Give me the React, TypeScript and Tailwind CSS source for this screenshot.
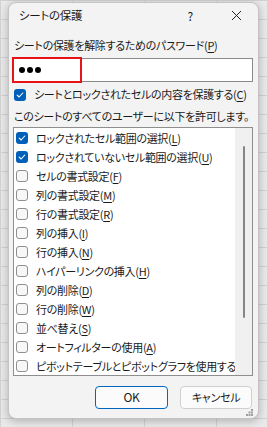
import React from 'react'

const FONT = "font-['Noto_Sans_CJK_JP','Noto_Sans',sans-serif] [font-feature-settings:'palt']"

const ITEMS: { label: string; key?: string; checked?: boolean }[] = [
  { label: 'ロックされたセル範囲の選択', key: 'L', checked: true },
  { label: 'ロックされていないセル範囲の選択', key: 'U', checked: true },
  { label: 'セルの書式設定', key: 'F' },
  { label: '列の書式設定', key: 'M' },
  { label: '行の書式設定', key: 'R' },
  { label: '列の挿入', key: 'I' },
  { label: '行の挿入', key: 'N' },
  { label: 'ハイパーリンクの挿入', key: 'H' },
  { label: '列の削除', key: 'D' },
  { label: '行の削除', key: 'W' },
  { label: '並べ替え', key: 'S' },
  { label: 'オートフィルターの使用', key: 'A' },
  { label: 'ピボットテーブルとピボットグラフを使用する' },
]

function Check({ checked }: { checked?: boolean }) {
  if (checked) {
    return (
      <span className="flex h-[12px] w-[12px] shrink-0 items-center justify-center rounded-[3px] bg-[#005fb8]">
        <svg width="8" height="8" viewBox="0 0 8 8" fill="none">
          <path d="M1.2 4.2 L3.1 6 L6.8 2" stroke="white" strokeWidth="1.1" strokeLinecap="round" strokeLinejoin="round" />
        </svg>
      </span>
    )
  }
  return <span className="h-[12px] w-[12px] shrink-0 rounded-[3px] border border-[#8f8f8f] bg-[#f7f7f7]" />
}

function Key({ k }: { k: string }) {
  return (
    <>
      (<span className="underline underline-offset-[2px]">{k}</span>)
    </>
  )
}

export default function App() {
  return (
    <div className="h-[427px] w-[267px] overflow-hidden bg-[#e9e9e9] bg-[linear-gradient(#d2d2d2_1px,transparent_1px),linear-gradient(90deg,#d2d2d2_1px,transparent_1px)] bg-[size:72px_19px] pt-[2px] pl-[8px]">
      <div className={`flex h-[417px] w-[251px] flex-col rounded-[8px] border border-[#c4c4c4] bg-[#f3f3f3] px-[4px] text-[11px] tracking-[-0.3px] whitespace-nowrap text-[#1a1a1a] shadow-[0_2px_8px_rgba(0,0,0,0.25)] ${FONT}`}>
        {/* title bar */}
        <div className="flex h-[26px] items-center">
          <span className="pl-[6px] text-[11.5px] leading-none">シートの保護</span>
          <span className="ml-auto mr-[38px] text-[12px] leading-none">?</span>
          <svg width="11" height="11" viewBox="0 0 11 11" className="mr-[12px]">
            <path d="M1 1 L10 10 M10 1 L1 10" stroke="#222" strokeWidth="1" />
          </svg>
        </div>

        <div className="mt-[7px] flex h-[18px] items-center pl-[1px]">
          シートの保護を解除するためのパスワード<Key k="P" />
        </div>

        <div className="relative mt-[4px] flex h-[24px] w-[240px] items-center border border-[#8a8a8a] bg-white pl-[5px]">
          <span className="flex gap-[2px]">
            <span className="h-[6px] w-[6px] rounded-full bg-black" />
            <span className="h-[6px] w-[6px] rounded-full bg-black" />
            <span className="h-[6px] w-[6px] rounded-full bg-black" />
          </span>
          <span className="absolute left-[-2px] top-[-2px] h-[26px] w-[70px] border-2 border-[#e5131a]" />
        </div>

        <div className="mt-[4px] flex h-[18px] items-center gap-[8px] pl-[1px]">
          <Check checked />
          <span>
            シートとロックされたセルの内容を保護する<Key k="C" />
          </span>
        </div>

        <div className="mt-[4px] flex h-[18px] items-center pl-[1px]">
          このシートのすべてのユーザーに以下を許可します。
        </div>

        <div className="mt-[2px] flex h-[250px] w-[240px] overflow-hidden border border-[#8e8e8e] bg-white">
          <div className="min-w-0 flex-1">
            {ITEMS.map((it) => (
              <div key={it.label} className="flex h-[19px] items-center gap-[8px] pl-[2px]">
                <Check checked={it.checked} />
                <span>
                  {it.label}
                  {it.key && <Key k={it.key} />}
                </span>
              </div>
            ))}
          </div>
          <div className="flex w-[17px] shrink-0 justify-center bg-[#f0f0f0] pt-[18px]">
            <div className="h-[172px] w-[2px] rounded-full bg-[#868686]" />
          </div>
        </div>

        <div className="mt-[10px] flex gap-[12px] pl-[82px]">
          <button className="h-[23px] w-[73px] rounded-[4px] border border-[#0067c0] bg-[#fbfbfb] text-[12px]">
            OK
          </button>
          <button className="h-[23px] w-[72px] rounded-[4px] border border-[#d0d0d0] bg-[#fbfbfb] text-[11px]">
            キャンセル
          </button>
        </div>

        <div className="mt-auto mb-[2px] flex justify-end pr-[1px]">
          <svg width="7" height="7" viewBox="0 0 7 7">
            <rect x="5" y="0" width="2" height="2" fill="#a0a0a0" />
            <rect x="2.5" y="2.5" width="2" height="2" fill="#a0a0a0" />
            <rect x="5" y="2.5" width="2" height="2" fill="#a0a0a0" />
            <rect x="0" y="5" width="2" height="2" fill="#a0a0a0" />
            <rect x="2.5" y="5" width="2" height="2" fill="#a0a0a0" />
            <rect x="5" y="5" width="2" height="2" fill="#a0a0a0" />
          </svg>
        </div>
      </div>
    </div>
  )
}
